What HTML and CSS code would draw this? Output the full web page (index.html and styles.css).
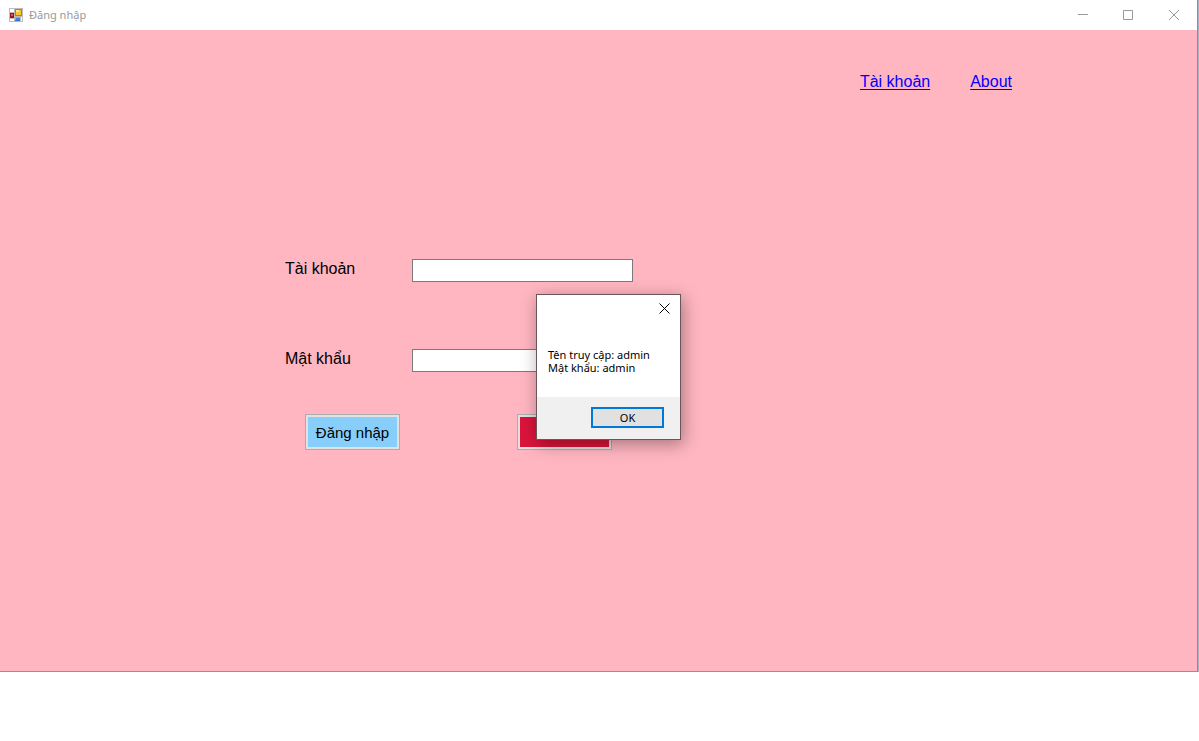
FILE: index.html
```html
<!DOCTYPE html>
<html lang="vi">
<head>
<meta charset="utf-8">
<title>Đăng nhập</title>
<link rel="stylesheet" href="styles.css">
</head>
<body>
<div class="window">
  <header class="titlebar">
    <svg class="app-icon" width="14" height="14" viewBox="0 0 14 14" shape-rendering="crispEdges" aria-hidden="true">
      <path fill="#bdbdbd" d="M0 0h14v14H0z"/>
      <path fill="#fff" d="M1 1h4v3H1zM1 11h4v2H1zM12 9h1v4h-1z"/>
      <path fill="#a80f0f" d="M1 5h4v5H1z"/>
      <path fill="#e8574b" d="M2 6h2v2H2z"/>
      <path fill="#b8860b" d="M6 1h7v7H6z"/>
      <path fill="#f7c52e" d="M7 2h5v5H7z"/>
      <path fill="#ffe694" d="M7 2h3v2H7z"/>
      <path fill="#3568c9" d="M6 9h5v4H6z"/>
      <path fill="#7fb0f5" d="M6 9h5v3H6z"/>
      <path fill="#4a80dc" d="M7 10h4v2H7z"/>
    </svg>
    <h1 class="title">Đăng nhập</h1>
    <div class="controls">
      <button class="control" type="button" aria-label="Minimize">
        <svg width="11" height="11" viewBox="0 0 11 11"><path d="M1 4.5h10"/></svg>
      </button>
      <button class="control" type="button" aria-label="Maximize">
        <svg width="11" height="11" viewBox="0 0 11 11"><path d="M.5.5h9v9h-9z"/></svg>
      </button>
      <button class="control" type="button" aria-label="Close">
        <svg width="11" height="11" viewBox="0 0 11 11"><path d="M0 0l10 10M10 0L0 10"/></svg>
      </button>
    </div>
  </header>
  <main class="client">
    <nav class="links">
      <a href="#account">Tài khoản</a>
      <a href="#about">About</a>
    </nav>
    <form class="login">
      <div class="field">
        <label for="account">Tài khoản</label>
        <input id="account" type="text">
      </div>
      <div class="field">
        <label for="password">Mật khẩu</label>
        <input id="password" type="password">
      </div>
      <div class="actions">
        <button class="action sign-in" type="button">Đăng nhập</button>
        <button class="action exit" type="button" aria-label="Thoát"></button>
      </div>
    </form>
  </main>
</div>
<div class="dialog" role="dialog" aria-describedby="message">
  <div class="dialog-bar">
    <button class="dialog-close" type="button" aria-label="Close">
      <svg width="11" height="11" viewBox="0 0 11 11"><path d="M.5.5l10 10M10.5.5l-10 10"/></svg>
    </button>
  </div>
  <p class="message" id="message">Tên truy cập: admin<br>Mật khẩu: admin</p>
  <div class="dialog-footer">
    <button class="ok" type="button">OK</button>
  </div>
</div>
</body>
</html>
```

FILE: styles.css
```css
* {
  box-sizing: border-box;
}

body {
  margin: 0;
  background: #fff;
  color: #000;
  font: 16px/20px "Liberation Sans", Arial, sans-serif;
}

button {
  margin: 0;
  padding: 0;
  border: 0;
  background: none;
  color: inherit;
  font: inherit;
}

svg {
  display: block;
  fill: none;
  stroke: currentColor;
}

.window {
  margin-right: 1px;
  border-right: 1px solid #8c8c94;
  border-bottom: 1px solid #a08c92;
  box-shadow: 1px 0 0 #a9b3c6;
}

.titlebar {
  display: flex;
  align-items: center;
  height: 30px;
  padding-left: 9px;
  background: #fff;
  color: #999;
}

.app-icon {
  stroke: none;
  margin-right: 6px;
}

.title {
  margin: 0;
  font: 11px/16px "Noto Sans", "Open Sans", sans-serif;
}

.controls {
  display: flex;
  margin-left: auto;
}

.control {
  display: grid;
  place-items: center;
  width: 46px;
  height: 28px;
}

.client {
  padding: 42px 0 221px;
  background: #ffb6c1;
}

.links {
  display: flex;
  justify-content: flex-end;
  gap: 40px;
  padding-right: 185px;
}

.links a {
  color: #00f;
  text-underline-offset: 2px;
  text-decoration-thickness: 1px;
}

.login {
  padding: 167px 0 0 285px;
}

.field {
  display: flex;
  align-items: flex-start;
  margin-bottom: 67px;
}

.field label {
  width: 127px;
}

.field input {
  width: 221px;
  height: 23px;
  padding: 0 4px;
  border: 1px solid #7a7a7a;
  background: #fff;
  font: inherit;
}

.actions {
  display: flex;
  gap: 117px;
  margin-top: -25px;
  padding-left: 20px;
}

.action {
  width: 95px;
  height: 36px;
  padding-top: 2px;
  border: 1px solid #adadad;
  box-shadow: inset 0 0 0 2px #e1e1e1;
  font-size: 15px;
}

.sign-in {
  background: #87cefa;
}

.exit {
  background: #dc143c;
}

.dialog {
  position: absolute;
  top: 294px;
  left: 536px;
  width: 145px;
  border: 1px solid #6b5559;
  background: #fff;
  box-shadow: 2px 4px 16px rgba(0, 0, 0, 0.36);
  font: 11px/13px "Noto Sans", "Open Sans", sans-serif;
}

.dialog-bar {
  display: flex;
  justify-content: flex-end;
}

.dialog-close {
  display: grid;
  place-items: center;
  width: 31px;
  height: 27px;
}

.message {
  margin: 0;
  padding: 26px 0 23px 11px;
  white-space: nowrap;
}

.dialog-footer {
  display: flex;
  justify-content: flex-end;
  padding: 10px 16px 11px 0;
  background: #f0f0f0;
}

.ok {
  width: 73px;
  height: 21px;
  border: 2px solid #0078d7;
  background: #e1e1e1;
}
```
